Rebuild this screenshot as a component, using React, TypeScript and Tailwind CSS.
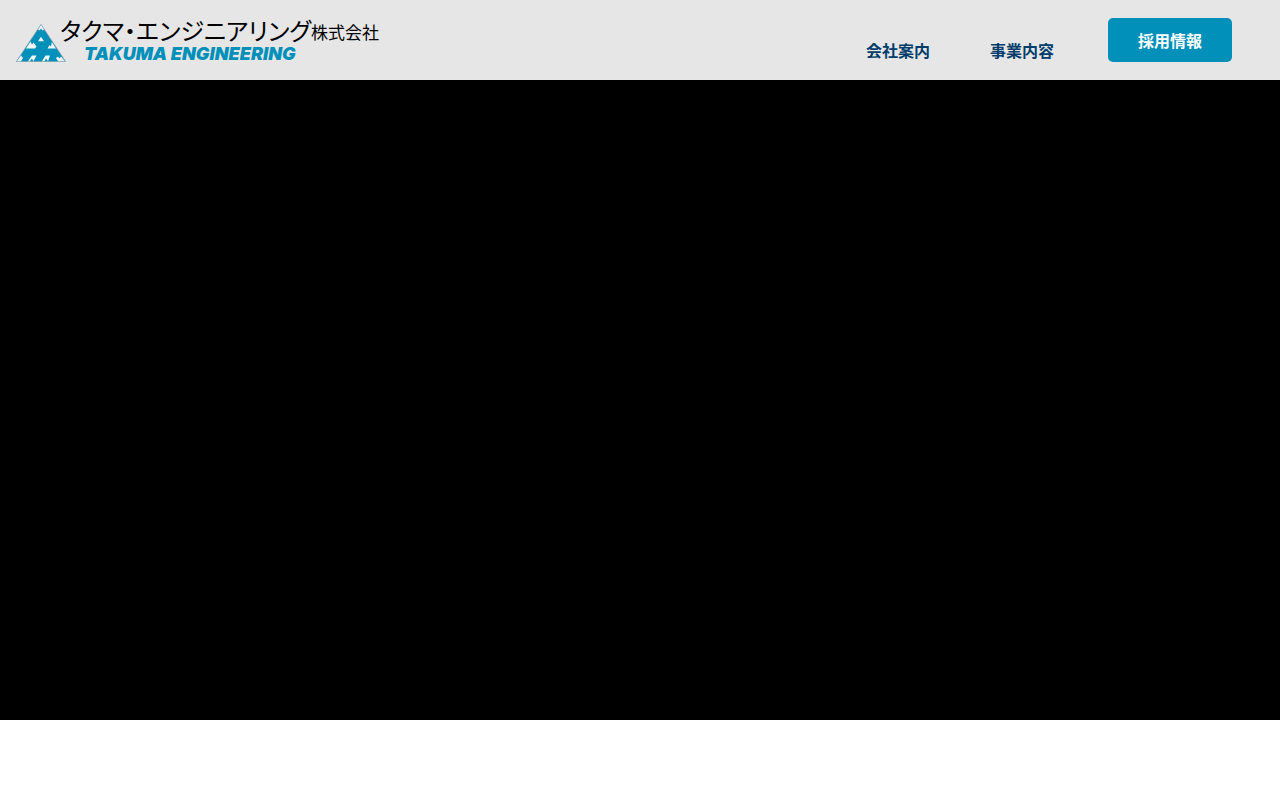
function LogoMark() {
  return (
    <svg viewBox="0 0 50 38" className="h-[38px] w-[50px] shrink-0" aria-hidden="true">
      <path d="M25 0.5 49.6 37.6H0.4Z" fill="#0090ba" stroke="#7d96a0" strokeWidth="0.7" />
      <g fill="#f0f6f8">
        <path d="M25 1 28 5.5 26.5 6.5 25 4.5 23.5 6.5 22 5.5Z" />
        <path d="M25 12.8 28 17.2H22Z" />
        <path d="M10 24.5 14.5 17.5 16 20.5 17.5 18.5 20.5 22.5 19 24.5Z" />
        <path d="M31.5 24.5 33.5 21 35 22.5 35.8 18 40 24.5Z" />
        <path d="M1 37.2 5 31.5 7 34 5 37.2Z" />
        <path d="M12 37.2 16 31.5H20.5L17.5 37.2 15.8 34.5 14 37.2Z" />
        <path d="M26 37.2 29.5 31.5H34L32 37.2 30 34.5 28.5 37.2Z" />
        <path d="M42 37.2 40 34 42 32.5 43.5 34.5 45 32.5 49 37.2Z" />
      </g>
    </svg>
  );
}

export default function App() {
  return (
    <div className="min-h-screen bg-white font-['Noto_Sans_CJK_JP',sans-serif]">
      <header className="flex h-20 items-center justify-between bg-[#e6e6e6] pr-12 pl-4">
        <a href="#top" className="flex items-end">
          <LogoMark />
          <span className="-ml-1.5 flex flex-col gap-1">
            <span className="flex items-end whitespace-nowrap text-black">
              <span className="text-2xl leading-6 [font-feature-settings:'palt']">タクマ・エンジニアリング</span>
              <span className="text-[17px] leading-5">株式会社</span>
            </span>
            <span className="pl-6 font-['Inter',sans-serif] text-lg leading-4 font-black text-[#0090ba] italic">
              TAKUMA ENGINEERING
            </span>
          </span>
        </a>
        <nav className="flex items-center text-base leading-6 font-bold whitespace-nowrap text-[#003d6b]">
          <a href="#company" className="mr-[60px] pt-5">会社案内</a>
          <a href="#business" className="mr-[54px] pt-5">事業内容</a>
          <a href="#recruit" className="rounded-[5px] bg-[#0090ba] px-[30px] py-2.5 text-white">採用情報</a>
        </nav>
      </header>
      <main>
        <section className="h-[80vh] bg-black" />
      </main>
    </div>
  );
}
